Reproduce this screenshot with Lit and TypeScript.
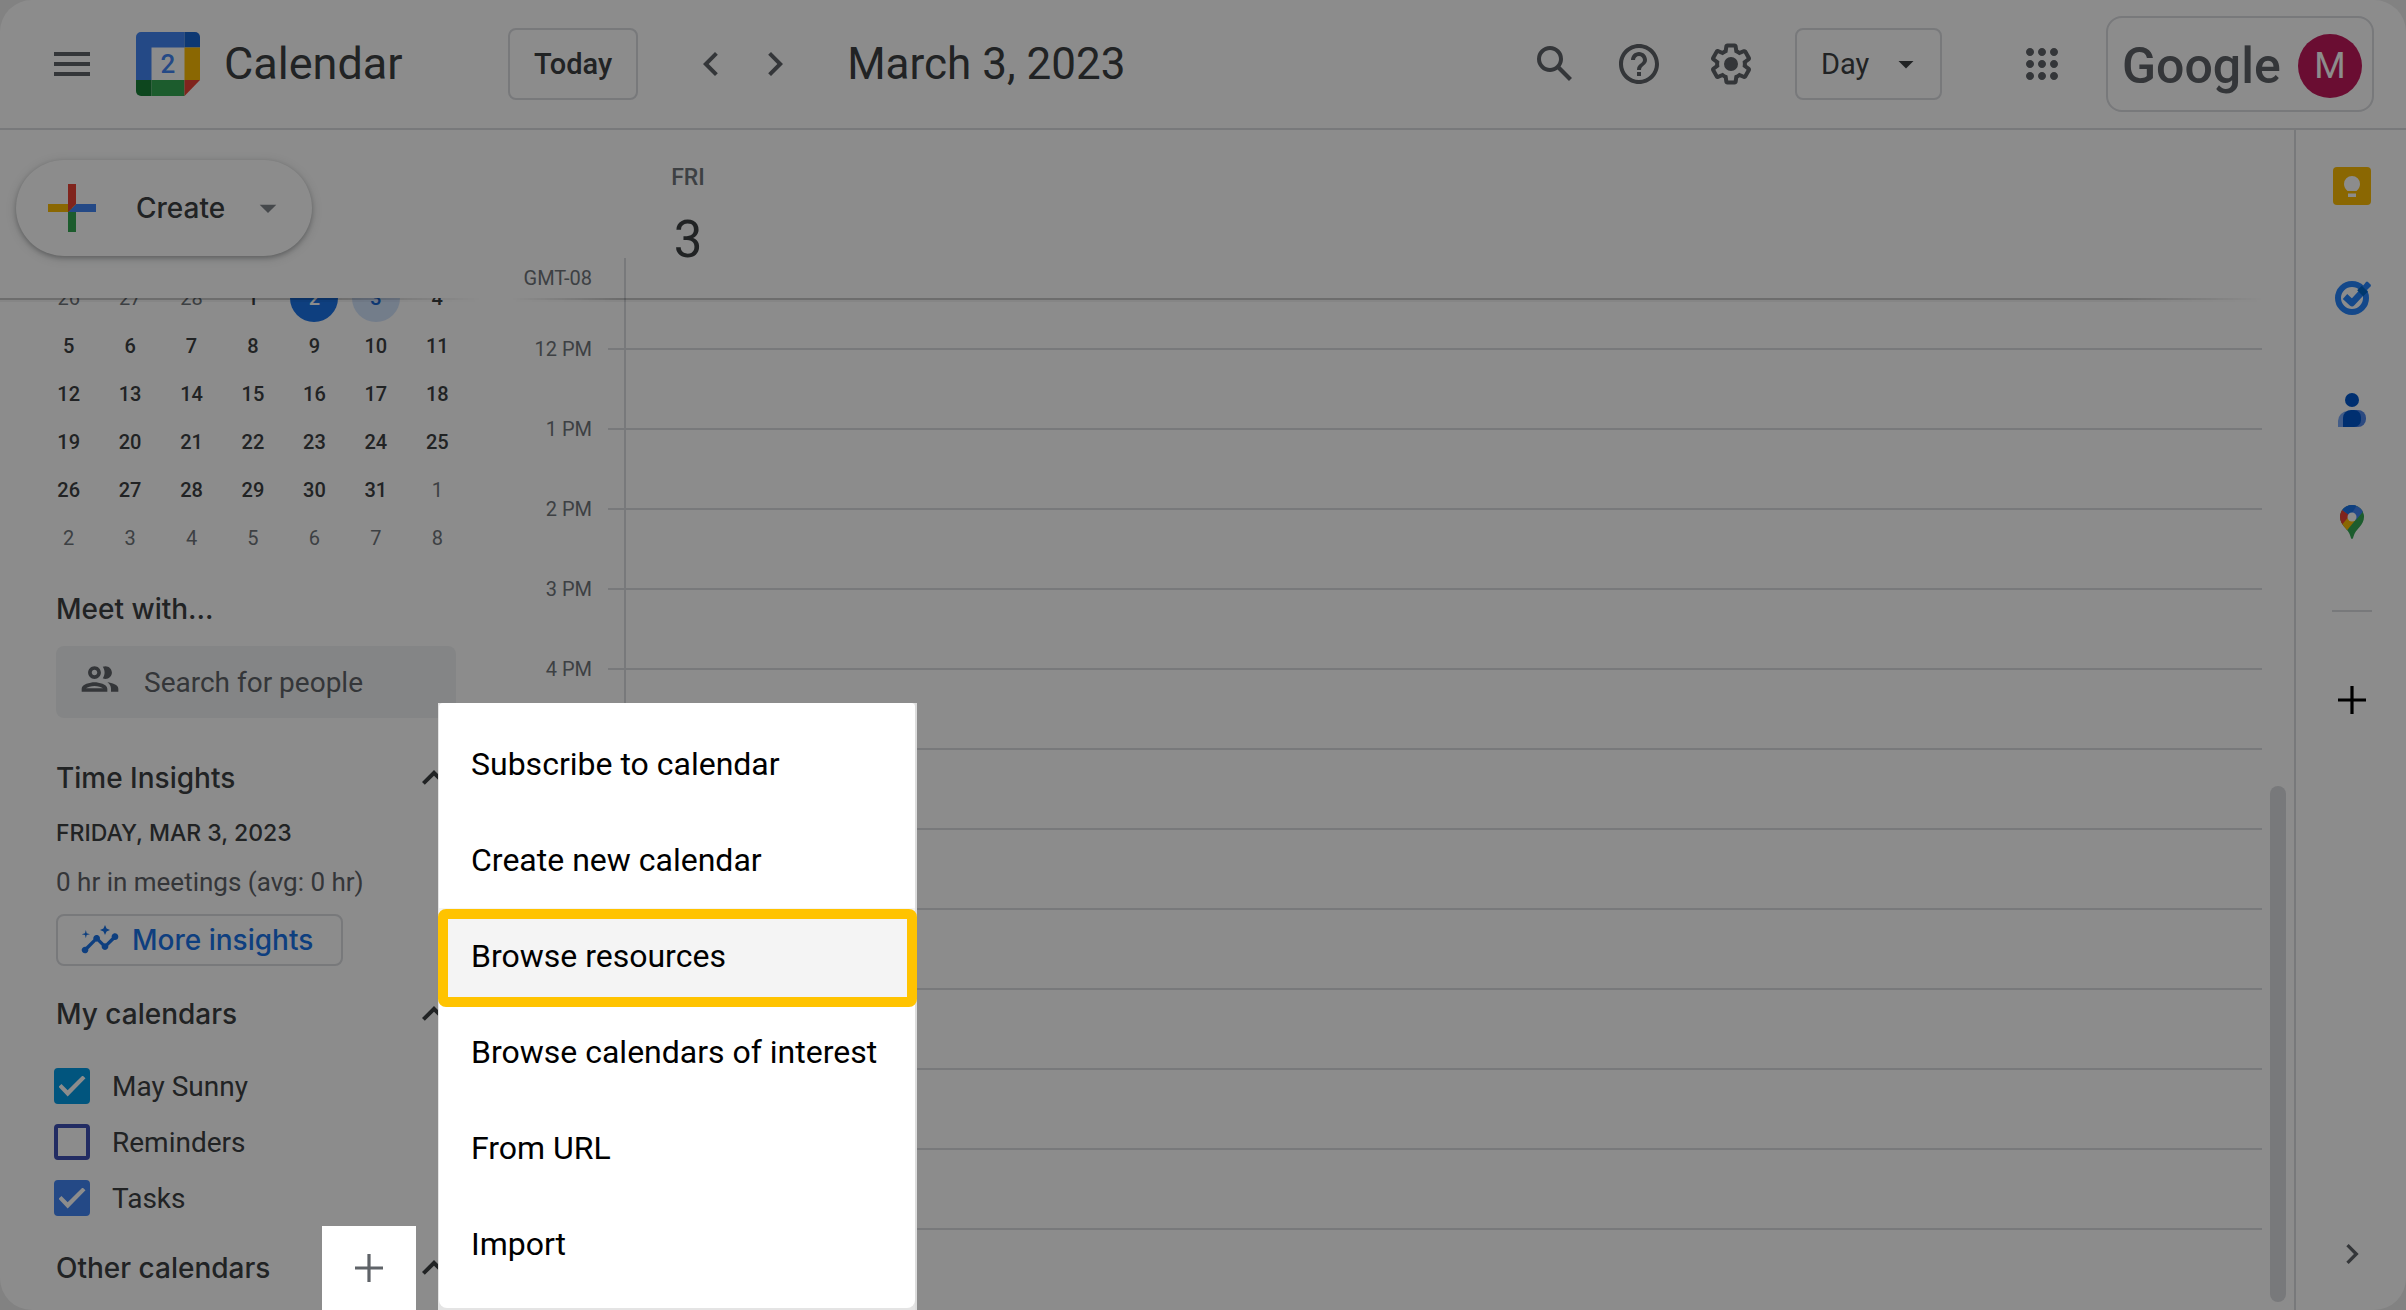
import { LitElement, html, css, svg, nothing } from "lit";
import { customElement } from "lit/decorators.js";
import { classMap } from "lit/directives/class-map.js";

const icon = (d: string, size = 24, cls = "") =>
  html`<svg class="icon ${cls}" viewBox="0 0 ${size} ${size}" aria-hidden="true"><path d=${d}></path></svg>`;

const PATHS = {
  menu: "M3 18h18v-2H3v2zm0-5h18v-2H3v2zm0-7v2h18V6H3z",
  prev: "M15.41 7.41L14 6l-6 6 6 6 1.41-1.41L10.83 12z",
  next: "M10 6L8.59 7.41 13.17 12l-4.58 4.59L10 18l6-6z",
  search:
    "M20.49 19l-5.73-5.73C15.53 12.2 16 10.91 16 9.5A6.5 6.5 0 1 0 9.5 16c1.41 0 2.7-.47 3.77-1.24L19 20.49 20.49 19zM5 9.5C5 7.01 7.01 5 9.5 5S14 7.01 14 9.5 11.99 14 9.5 14 5 11.99 5 9.5z",
  help: "M11 18h2v-2h-2v2zm1-16C6.48 2 2 6.48 2 12s4.48 10 10 10 10-4.48 10-10S17.52 2 12 2zm0 18c-4.41 0-8-3.59-8-8s3.59-8 8-8 8 3.59 8 8-3.59 8-8 8zm0-14c-2.21 0-4 1.79-4 4h2c0-1.1.9-2 2-2s2 .9 2 2c0 2-3 1.75-3 5h2c0-2.25 3-2.5 3-5 0-2.21-1.79-4-4-4z",
  gear: "M13.85 22.25h-3.7c-.74 0-1.36-.54-1.45-1.27l-.27-1.89c-.27-.14-.53-.29-.79-.46l-1.8.72c-.7.26-1.47-.03-1.81-.65L2.2 15.53c-.35-.66-.2-1.44.36-1.88l1.53-1.19c-.01-.15-.02-.3-.02-.46 0-.15.01-.31.02-.46l-1.52-1.19c-.59-.45-.74-1.26-.37-1.88l1.85-3.19c.34-.62 1.11-.9 1.79-.63l1.81.73c.26-.17.52-.32.78-.46l.27-1.91c.09-.7.71-1.25 1.44-1.25h3.7c.74 0 1.36.54 1.45 1.27l.27 1.89c.27.14.53.29.79.46l1.8-.72c.71-.26 1.48.03 1.82.65l1.84 3.18c.36.66.2 1.44-.36 1.88l-1.52 1.19c.01.15.02.3.02.46s-.01.31-.02.46l1.52 1.19c.56.45.72 1.23.37 1.86l-1.86 3.22c-.34.62-1.11.9-1.8.63l-1.8-.72c-.26.17-.52.32-.78.46l-.27 1.91c-.1.68-.72 1.22-1.46 1.22zm-3.23-2h2.76l.37-2.55.53-.22c.44-.18.88-.44 1.34-.78l.45-.34 2.38.96 1.38-2.4-2.03-1.58.07-.56c.03-.26.06-.51.06-.78s-.03-.53-.06-.78l-.07-.56 2.03-1.58-1.39-2.4-2.39.96-.45-.35c-.42-.32-.87-.58-1.33-.77l-.52-.22-.37-2.55h-2.76l-.37 2.55-.53.21c-.44.19-.88.44-1.34.79l-.45.33-2.38-.95-1.39 2.39 2.03 1.58-.07.56a7 7 0 0 0-.06.79c0 .26.02.53.06.78l.07.56-2.03 1.58 1.38 2.4 2.39-.96.45.35c.43.33.86.58 1.33.77l.53.22.38 2.55zM12 15.5a3.5 3.5 0 1 0 0-7 3.5 3.5 0 0 0 0 7z",
  down: "M7 10l5 5 5-5z",
  apps: "M6 8c1.1 0 2-.9 2-2s-.9-2-2-2-2 .9-2 2 .9 2 2 2zm6 12c1.1 0 2-.9 2-2s-.9-2-2-2-2 .9-2 2 .9 2 2 2zm-6 0c1.1 0 2-.9 2-2s-.9-2-2-2-2 .9-2 2 .9 2 2 2zm0-6c1.1 0 2-.9 2-2s-.9-2-2-2-2 .9-2 2 .9 2 2 2zm6 0c1.1 0 2-.9 2-2s-.9-2-2-2-2 .9-2 2 .9 2 2 2zm4-8c0 1.1.9 2 2 2s2-.9 2-2-.9-2-2-2-2 .9-2 2zm-4 2c1.1 0 2-.9 2-2s-.9-2-2-2-2 .9-2 2 .9 2 2 2zm6 6c1.1 0 2-.9 2-2s-.9-2-2-2-2 .9-2 2 .9 2 2 2zm0 6c1.1 0 2-.9 2-2s-.9-2-2-2-2 .9-2 2 .9 2 2 2z",
  add: "M19 12.8h-6.2V19h-1.6v-6.2H5v-1.6h6.2V5h1.6v6.2H19z",
  people:
    "M9 13.75c-2.34 0-7 1.17-7 3.5V19h14v-1.75c0-2.33-4.66-3.5-7-3.5zM4.34 17c.84-.58 2.87-1.25 4.66-1.25s3.82.67 4.66 1.25H4.34zM9 12c1.93 0 3.5-1.57 3.5-3.5S10.93 5 9 5 5.5 6.57 5.5 8.5 7.07 12 9 12zm0-5c.83 0 1.5.67 1.5 1.5S9.83 10 9 10s-1.5-.67-1.5-1.5S8.17 7 9 7zm7.04 6.81c1.16.84 1.96 1.96 1.96 3.44V19h4v-1.75c0-2.02-3.5-3.17-5.96-3.44zM15 12c1.93 0 3.5-1.57 3.5-3.5S16.93 5 15 5c-.54 0-1.04.13-1.5.35.63.89 1 1.98 1 3.15s-.37 2.26-1 3.15c.46.22.96.35 1.5.35z",
  insights:
    "M21 8c-1.45 0-2.26 1.44-1.93 2.51l-3.55 3.56c-.3-.09-.74-.09-1.04 0l-2.55-2.55C12.27 10.45 11.46 9 10 9c-1.45 0-2.27 1.44-1.93 2.52l-4.56 4.55C2.44 15.74 1 16.55 1 18c0 1.1.9 2 2 2 1.45 0 2.26-1.44 1.93-2.51l4.55-4.56c.3.09.74.09 1.04 0l2.55 2.55C12.73 16.55 13.54 18 15 18c1.45 0 2.27-1.44 1.93-2.52l3.56-3.55C21.56 12.26 23 11.45 23 10c0-1.1-.9-2-2-2zM15 9l.94-2.07L18 6l-2.06-.93L15 3l-.92 2.07L12 6l2.08.93zM3.5 11L4 9l2-.5L4 8l-.5-2L3 8l-2 .5L3 9z",
};

const calendarLogo = html`<svg class="logo" viewBox="0 0 64 64" aria-hidden="true">
  <rect x="15" y="15" width="34" height="33" fill="#fff"></rect>
  <path d="M5 0h43.500v15.500H15.500V48H0V5a5 5 0 0 1 5-5z" fill="#4285f4"></path>
  <path d="M48.500 0H59a5 5 0 0 1 5 5v10.500H48.500z" fill="#1967d2"></path>
  <path d="M48.500 15.500H64V48H48.500z" fill="#fbbc04"></path>
  <path d="M0 48h15.500v16H5a5 5 0 0 1-5-5z" fill="#188038"></path>
  <path d="M15.500 48h33v16h-33z" fill="#34a853"></path>
  <path d="M48.500 48H64L48.500 64z" fill="#ea4335"></path>
  <text x="32" y="41" text-anchor="middle" class="logo-day">2</text>
</svg>`;

const createPlus = html`<svg class="plus" viewBox="0 0 36 36" aria-hidden="true">
  <path fill="#34a853" d="M16 16v14h4V20z"></path>
  <path fill="#4285f4" d="M30 16H20l-4 4h14z"></path>
  <path fill="#fbbc05" d="M6 16v4h10l4-4z"></path>
  <path fill="#ea4335" d="M20 16V6h-4v14z"></path>
</svg>`;

const keepIcon = svg`
  <rect x="1" y="1" width="38" height="38" rx="4" fill="#fbbc04"></rect>
  <path fill="#fff" d="M20 10a8 8 0 0 0-8 8c0 3 1.500 5 3.500 7h9c2-2 3.500-4 3.500-7a8 8 0 0 0-8-8zM16 27.500h8V31h-8z"></path>`;
const tasksIcon = svg`
  <circle cx="20" cy="20" r="14" fill="none" stroke="#2684fc" stroke-width="6"></circle>
  <path d="M13 18.500l7 6.500L33 11" fill="none" stroke="#2684fc" stroke-width="6.500" stroke-linejoin="round"></path>
  <path d="M28.500 11l5.500-7a1.500 1.500 0 0 1 2 0l2.500 2.500a1.500 1.500 0 0 1 0 2L32 15z" fill="#2684fc"></path>
  <path d="M27.500 10l6 6" stroke="#0066c8" stroke-width="6.500"></path>`;
const contactsIcon = svg`
  <path d="M6 37v-6a10 10 0 0 1 10-10h2v16z" fill="#7baaf7"></path>
  <path d="M20 20h6a8 8 0 0 1 8 8v1a8 8 0 0 1-8 8h-6z" fill="#5187ec"></path>
  <path d="M11 37v-9a8 8 0 0 1 8-8h3a7 7 0 0 1 7 7v3a7 7 0 0 1-7 7z" fill="#0057cc"></path>
  <circle cx="20" cy="10" r="7" fill="#0057cc"></circle>`;
const mapsIcon = svg`
  <clipPath id="pin"><path d="M20 3a12 12 0 0 0-12 12c0 4 2 7 4 9.500 3 3.500 5.500 6 6.500 10 .4 1.300.7 2.500 1.500 2.500s1.100-1.200 1.500-2.500c1-4 3.500-6.500 6.500-10 2-2.500 4-5.500 4-9.500A12 12 0 0 0 20 3z"></path></clipPath>
  <g clip-path="url(#pin)">
    <path d="M0 0h40v40H0z" fill="#34a853"></path>
    <path d="M8 20l8-8 7.500 6L12 32 4 24z" fill="#fbbc04"></path>
    <path d="M4 5l7 3 7 5-9 11-6-4z" fill="#ea4335"></path>
    <path d="M10 8L16 0h14l4 6-10 12-4-3z" fill="#4285f4"></path>
    <path d="M10 7.500L17 0h10l-9 14z" fill="#1a73e8"></path>
  </g>
  <circle cx="20" cy="15" r="4.500" fill="#fff"></circle>`;

const WEEKS = [
  [26, 27, 28, 1, 2, 3, 4],
  [5, 6, 7, 8, 9, 10, 11],
  [12, 13, 14, 15, 16, 17, 18],
  [19, 20, 21, 22, 23, 24, 25],
  [26, 27, 28, 29, 30, 31, 1],
  [2, 3, 4, 5, 6, 7, 8],
];
const HOURS = ["12 PM", "1 PM", "2 PM", "3 PM", "4 PM", "", "", "", "", "", "", ""];
const MENU = [
  "Subscribe to calendar",
  "Create new calendar",
  "Browse resources",
  "Browse calendars of interest",
  "From URL",
  "Import",
];
const CALENDARS = [
  { name: "May Sunny", tone: "sky", on: true },
  { name: "Reminders", tone: "indigo", on: false },
  { name: "Tasks", tone: "blue", on: true },
];
const APPS = [
  { name: "Keep", art: keepIcon },
  { name: "Tasks", art: tasksIcon },
  { name: "Contacts", art: contactsIcon },
  { name: "Maps", art: mapsIcon },
];

const base = css`
  * { box-sizing: border-box; }
  button {
    font: inherit; color: inherit; background: none; border: 0; padding: 0; margin: 0;
    display: inline-flex; align-items: center; justify-content: center; cursor: pointer;
  }
  .icon { width: 48px; height: 48px; fill: currentColor; display: block; flex: none; }
`;

@customElement("calendar-header")
class CalendarHeader extends LitElement {
  static styles = [
    base,
    css`
      :host { display: block; }
      .bar {
        height: 130px; border-bottom: 2px solid #dadce0; padding: 0 32px 0 40px;
        display: flex; align-items: center; color: #5f6368;
      }
      .round { width: 64px; height: 64px; }
      .logo { width: 64px; height: 64px; margin-left: 32px; display: block; }
      .logo-day { font: 500 26px Roboto, sans-serif; fill: #4285f4; }
      .brand { font-size: 45px; line-height: 56px; color: #3c4043; margin-left: 24px; width: 284px; }
      .outlined {
        height: 72px; border: 2px solid #dadce0; border-radius: 8px; padding: 0 24px;
        color: #3c4043; font-weight: 500; font-size: 29px;
      }
      .arrows { display: flex; margin-left: 41px; }
      h1 { font-size: 44px; line-height: 56px; font-weight: 400; color: #3c4043; margin: 0 auto 0 40px; }
      .tools { display: flex; align-items: center; }
      .tool { width: 48px; height: 48px; margin-right: 40px; }
      .find { margin-right: 36px; }
      .support { margin-right: 44px; }
      .view { width: 147px; padding: 0 16px 0 24px; justify-content: space-between; font-weight: 400; }
      .view .icon { width: 36px; height: 36px; }
      .launcher { margin: 0 40px 0 76px; width: 48px; height: 48px; }
      .account {
        width: 268px; height: 96px; border: 2px solid #dadce0; border-radius: 16px;
        padding: 4px 10px 0 14px; display: flex; align-items: center; justify-content: space-between;
      }
      .google { font-size: 50px; line-height: 60px; font-weight: 500; }
      .avatar {
        width: 64px; height: 64px; border-radius: 50%; background: #c2185b; color: #fff;
        display: grid; place-items: center; font-size: 36px;
      }
    `,
  ];

  render() {
    return html`<header class="bar">
      <button class="round" aria-label="Main menu">${icon(PATHS.menu)}</button>
      ${calendarLogo}
      <span class="brand">Calendar</span>
      <button class="outlined">Today</button>
      <div class="arrows">
        <button class="round" aria-label="Previous day">${icon(PATHS.prev)}</button>
        <button class="round" aria-label="Next day">${icon(PATHS.next)}</button>
      </div>
      <h1>March 3, 2023</h1>
      <div class="tools">
        <button class="tool find" aria-label="Search">${icon(PATHS.search)}</button>
        <button class="tool support" aria-label="Support">${icon(PATHS.help)}</button>
        <button class="tool" aria-label="Settings">${icon(PATHS.gear)}</button>
        <button class="outlined view">Day ${icon(PATHS.down)}</button>
        <button class="launcher" aria-label="Google apps">${icon(PATHS.apps)}</button>
        <button class="account" aria-label="Google Account">
          <span class="google">Google</span><span class="avatar">M</span>
        </button>
      </div>
    </header>`;
  }
}

@customElement("calendar-sidebar")
class CalendarSidebar extends LitElement {
  static styles = [
    base,
    css`
      :host { display: flex; flex-direction: column; width: 480px; flex: none; min-height: 0; color: #3c4043; }
      .top { height: 168px; padding: 30px 16px 0; flex: none; }
      .create {
        width: 296px; height: 96px; border-radius: 48px; padding: 0 24px 0 20px;
        box-shadow: 0 2px 4px rgba(60, 64, 67, 0.3), 0 2px 8px 2px rgba(60, 64, 67, 0.15);
        font: 500 28px/36px Inter, sans-serif; justify-content: flex-start;
      }
      .plus { width: 72px; height: 72px; display: block; margin-right: 28px; }
      .create .icon { width: 40px; height: 40px; color: #80868b; margin-left: auto; }
      .edge { height: 4px; margin-bottom: -4px; flex: none; position: relative;
        background: linear-gradient(rgba(0, 0, 0, 0.22) 50%, rgba(0, 0, 0, 0.05) 50%);
        mask-image: linear-gradient(90deg, #000 70%, transparent); }
      .scroll { flex: 1; min-height: 0; overflow: hidden; }
      table { border-collapse: collapse; table-layout: fixed; width: 430px; margin: -24px 0 0 38px; }
      td { height: 48px; padding: 0; text-align: center; font-size: 20px; font-weight: 500; }
      .day { width: 48px; height: 48px; border-radius: 50%; display: grid; place-items: center; margin: 0 auto; }
      .out { color: #70757a; font-weight: 400; }
      .today { background: #1a73e8; color: #fff; }
      .picked { background: #d2e3fc; color: #1967d2; }
      .body { padding: 29px 24px 0 56px; }
      h2 { font: 500 28px/36px Inter, sans-serif; margin: 0; }
      .search {
        margin-top: 19px; height: 72px; border-radius: 8px; background: #f1f3f4; width: 400px;
        display: flex; align-items: center; padding: 0 22px; gap: 22px; color: #5f6368;
      }
      .search .icon { width: 44px; height: 44px; margin-bottom: 6px; }
      input[type="text"] {
        border: 0; background: none; outline: 0; font: inherit; font-size: 28px; width: 100%; min-width: 0; padding: 0;
      }
      input::placeholder { color: #5f6368; opacity: 1; }
      .row { display: flex; align-items: center; justify-content: space-between; height: 48px; width: 390px; }
      .fold svg { width: 24px; height: 24px; fill: #3c4043; display: block; }
      .insights { margin-top: 36px; }
      .date { margin: 15px 0 0; font: 500 23px/32px Inter, sans-serif; }
      .note { margin: 17px 0 16px; font-size: 26px; line-height: 32px; color: #5f6368; }
      .more {
        height: 52px; width: 287px; border: 2px solid #dadce0; border-radius: 8px; color: #1a73e8;
        font: 500 28px/36px Inter, sans-serif; gap: 12px; justify-content: flex-start; padding: 0 22px;
        white-space: nowrap;
      }
      .more .icon { width: 40px; height: 40px; }
      .mine { margin-top: 24px; }
      .list { margin: 20px 0 0 -2px; }
      .check { height: 56px; display: flex; align-items: center; gap: 22px; font-size: 28px; }
      .check input {
        appearance: none; width: 36px; height: 36px; margin: 0; border: 4px solid var(--tone);
        border-radius: 4px; display: grid; place-items: center;
      }
      .check input:checked { background: var(--tone); }
      .check input:checked::before {
        content: ""; width: 27px; height: 21px; background: #fff;
        clip-path: polygon(0 53%, 11% 40%, 34% 70%, 89% 0, 100% 13%, 34% 100%);
      }
      .sky { --tone: #039be5; }
      .indigo { --tone: #3f51b5; }
      .blue { --tone: #4285f4; }
      .other { height: 84px; }
      .other h2 { flex: 1; }
      .add {
        width: 94px; height: 84px; background: #fff; color: #5f6368; margin-right: 6px;
        position: relative; z-index: 2;
      }
    `,
  ];

  private fold(label: string) {
    return html`<button class="fold" aria-label="Collapse ${label}">
      <svg viewBox="6 6 12 12" aria-hidden="true"><path d="M12 8l-6 6 1.410 1.410L12 10.830l4.590 4.580L18 14z"></path></svg>
    </button>`;
  }

  private day(n: number, week: number) {
    const cls = classMap({
      day: true,
      out: (week === 0 && n > 20) || (week === 4 && n === 1) || week === 5,
      today: week === 0 && n === 2,
      picked: week === 0 && n === 3,
    });
    return html`<td><span class=${cls}>${n}</span></td>`;
  }

  render() {
    return html`
      <div class="top">
        <button class="create">${createPlus}Create${icon(PATHS.down)}</button>
      </div>
      <div class="edge"></div>
      <div class="scroll">
        <table aria-label="March 2023">
          <tbody>
            ${WEEKS.map((week, i) => html`<tr>${week.map((n) => this.day(n, i))}</tr>`)}
          </tbody>
        </table>
        <div class="body">
          <h2>Meet with…</h2>
          <label class="search">
            ${icon(PATHS.people)}
            <input type="text" placeholder="Search for people" aria-label="Search for people" />
          </label>
          <div class="row insights"><h2>Time Insights</h2>${this.fold("Time Insights")}</div>
          <p class="date">FRIDAY, MAR 3, 2023</p>
          <p class="note">0 hr in meetings (avg: 0 hr)</p>
          <button class="more">${icon(PATHS.insights)}More insights</button>
          <div class="row mine"><h2>My calendars</h2>${this.fold("My calendars")}</div>
          <div class="list">
            ${CALENDARS.map(
              (c) => html`<label class="check ${c.tone}"><input type="checkbox" .checked=${c.on} />${c.name}</label>`,
            )}
          </div>
          <div class="row other">
            <h2>Other calendars</h2>
            <button class="add" aria-label="Add other calendars" aria-haspopup="menu">${icon(PATHS.add)}</button>
            ${this.fold("Other calendars")}
          </div>
        </div>
      </div>
    `;
  }
}

@customElement("day-view")
class DayView extends LitElement {
  static styles = [
    base,
    css`
      :host { display: flex; flex-direction: column; flex: 1; min-width: 0; min-height: 0; color: #70757a; }
      .head { height: 168px; flex: none; display: grid; grid-template-columns: 144px 1fr; }
      .zone { font-size: 20px; line-height: 24px; text-align: right; padding: 0 32px 8px 0; align-self: end; }
      .cell { display: flex; flex-direction: column; justify-content: space-between; padding-top: 34px; }
      .date { width: 128px; display: flex; flex-direction: column; align-items: center; gap: 18px; height: 94px; }
      .weekday { font-size: 23px; line-height: 28px; font-weight: 500; }
      .num { font-size: 51px; line-height: 60px; color: #3c4043; }
      .stub { height: 40px; border-left: 2px solid #dadce0; }
      .edge { height: 4px; margin: 0 32px -4px; flex: none; position: relative;
        background: linear-gradient(rgba(0, 0, 0, 0.22) 50%, rgba(0, 0, 0, 0.05) 50%);
        mask-image: linear-gradient(90deg, transparent, #000 6%, #000 92%, transparent); }
      .body { flex: 1; min-height: 0; display: flex; overflow: hidden; }
      .hours { flex: 1; min-width: 0; }
      .hour, .gap { display: grid; grid-template-columns: 128px 16px 1fr; align-items: center; height: 80px; }
      .gap { height: 11px; }
      .label { font-size: 20px; line-height: 24px; text-align: right; padding-right: 16px; }
      .tick { height: 2px; background: #dadce0; }
      .slot { height: 100%; border-left: 2px solid #dadce0; display: flex; align-items: center; grid-column: 3; }
      .slot .tick { flex: 1; }
      .thumb {
        width: 16px; height: 51%; border-radius: 8px; background: #dadce0; align-self: flex-end;
        margin: 0 8px 8px;
      }
    `,
  ];

  render() {
    return html`
      <div class="head">
        <div class="zone">GMT-08</div>
        <div class="cell">
          <div class="date"><span class="weekday">FRI</span><span class="num">3</span></div>
          <div class="stub"></div>
        </div>
      </div>
      <div class="edge"></div>
      <div class="body">
        <div class="hours">
          <div class="gap"><div class="slot"></div></div>
          ${HOURS.map(
            (h) => html`<div class="hour">
              <span class="label">${h || nothing}</span><span class="tick"></span>
              <div class="slot"><span class="tick"></span></div>
            </div>`,
          )}
        </div>
        <div class="thumb"></div>
      </div>
    `;
  }
}

@customElement("app-rail")
class AppRail extends LitElement {
  static styles = [
    base,
    css`
      :host {
        display: flex; flex-direction: column; align-items: center; width: 112px; flex: none;
        border-left: 2px solid #dadce0; padding: 36px 0 36px 2px;
      }
      .app { width: 40px; height: 40px; margin-bottom: 72px; }
      .app svg { width: 40px; height: 40px; display: block; }
      hr { width: 40px; height: 2px; border: 0; background: #dadce0; margin: -4px 0 64px; flex: none; }
      .add { color: #000; }
      .hide { color: #5f6368; margin-top: auto; }
      .hide .icon { width: 40px; height: 40px; }
    `,
  ];

  render() {
    return html`
      ${APPS.map(
        (a) => html`<button class="app" aria-label=${a.name}><svg viewBox="0 0 40 40" aria-hidden="true">${a.art}</svg></button>`,
      )}
      <hr />
      <button class="add" aria-label="Get add-ons">${icon(PATHS.add)}</button>
      <button class="hide" aria-label="Hide side panel">${icon(PATHS.next)}</button>
    `;
  }
}

@customElement("app-root")
class AppRoot extends LitElement {
  static styles = [
    base,
    css`
      :host { display: block; font-family: Roboto, "Liberation Sans", sans-serif; }
      .frame { position: relative; height: 100vh; background: #ededed; overflow: hidden; }
      .app { height: 100%; background: #fff; border-radius: 32px; display: flex; flex-direction: column; }
      .main { flex: 1; min-height: 0; display: flex; }
      .scrim { position: absolute; inset: 0; background: rgba(0, 0, 0, 0.45); z-index: 1; pointer-events: none; }
      .menu {
        position: absolute; left: 438px; bottom: 0; width: 479px; z-index: 3; background: #e4e4e4;
        border-right: 2px solid #dcdcdc; padding: 0 0 2px 1px;
      }
      .sheet { background: #fff; padding: 13px 0 16px; border-radius: 4px 4px 8px 8px; }
      .item {
        width: 100%; height: 96px; padding: 0 32px; justify-content: flex-start;
        font-size: 32px; color: #000; white-space: nowrap;
      }
      .active { background: #f4f4f4; position: relative; }
      .active::after {
        content: ""; position: absolute; inset: 1px -2px -3px -1px; border: 10px solid #ffc300; border-radius: 8px;
      }
    `,
  ];

  render() {
    return html`<div class="frame">
      <div class="app">
        <calendar-header></calendar-header>
        <div class="main">
          <calendar-sidebar></calendar-sidebar>
          <day-view></day-view>
          <app-rail></app-rail>
        </div>
      </div>
      <div class="scrim"></div>
      <div class="menu">
        <div class="sheet" role="menu">
          ${MENU.map(
            (m, i) => html`<button role="menuitem" class=${classMap({ item: true, active: i === 2 })}>${m}</button>`,
          )}
        </div>
      </div>
    </div>`;
  }
}
